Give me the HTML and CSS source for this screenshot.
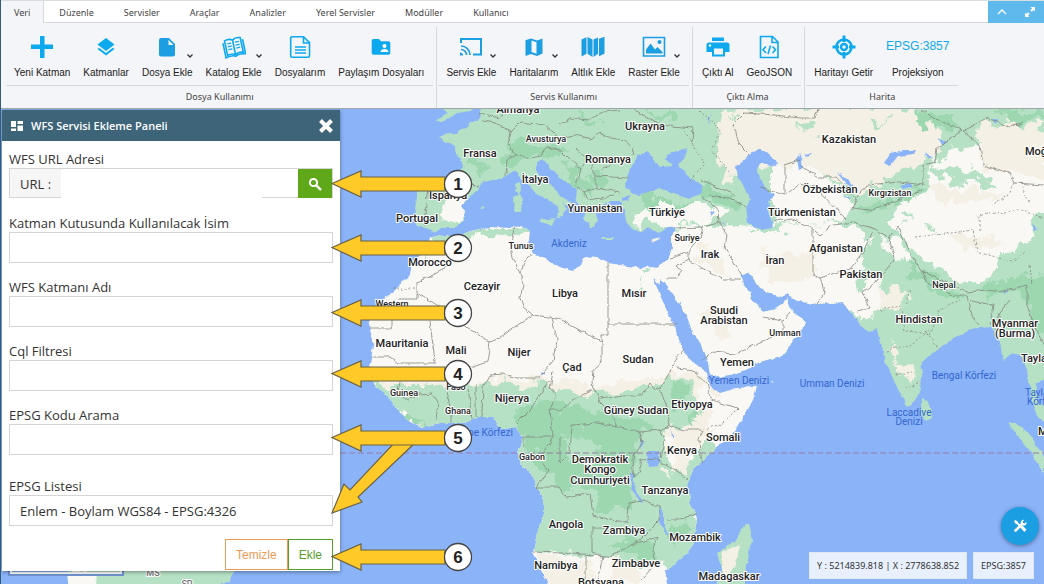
FILE: index.html
```html
<!DOCTYPE html>
<html lang="tr">
<head>
  <meta charset="UTF-8" />
  <meta name="viewport" content="width=device-width, initial-scale=1.0"/>
  <title>WFS Servisi Ekleme Paneli</title>
  <link rel="stylesheet" href="styles.css">
</head>
<body>
  <header class="ribbon">
    <nav class="tabs">
      <a class="tab active" href="#veri">Veri</a>
      <a class="tab" href="#duzenle">Düzenle</a>
      <a class="tab" href="#servisler">Servisler</a>
      <a class="tab" href="#araclar">Araçlar</a>
      <a class="tab" href="#analizler">Analizler</a>
      <a class="tab" href="#yerel">Yerel Servisler</a>
      <a class="tab" href="#moduller">Modüller</a>
      <a class="tab" href="#kullanici">Kullanıcı</a>
      <div class="window-tools">
        <button type="button" aria-label="Daralt">
          <svg width="12" height="12" viewBox="0 0 12 12"><path d="M2 8l4-4 4 4" fill="none" stroke="#fff" stroke-width="1.3"/></svg>
        </button>
        <button type="button" aria-label="Tam ekran">
          <svg width="12" height="12" viewBox="0 0 12 12"><path d="M6.500 1H11v4.500L9.500 4 7.800 5.700 6.300 4.200 8 2.500zM5.500 11H1V6.500L2.500 8l1.700-1.700 1.500 1.500L4 9.500z" fill="#fff"/></svg>
        </button>
      </div>
    </nav>

    <div class="groups">
      <section class="group">
        <div class="tools">
          <button class="tool" type="button">
            <svg class="icon" viewBox="0 0 24 24"><path d="M10 1h4.500v8.500H23V14h-8.500v9H10v-9H1V9.500h9z"/></svg>
            Yeni Katman
          </button>
          <button class="tool" type="button">
            <svg class="icon" viewBox="0 0 24 24"><path d="M12 3l8.500 6.500L12 16 3.500 9.500z"/><path d="M12 18.100l6.900-5.400 1.600 1.300L12 20.600 3.500 14l1.600-1.300z"/></svg>
            Katmanlar
          </button>
          <button class="tool" type="button">
            <svg class="icon" viewBox="0 0 24 24"><path class="soft" d="M6 3h8l6 6v10.500a2 2 0 0 1-2 2H6a2 2 0 0 1-2-2V5a2 2 0 0 1 2-2zm7.500 1.800V10H18.500z"/></svg>
            Dosya Ekle
            <svg class="caret" viewBox="0 0 8 6"><path d="M1.500 1.500L4 4l2.500-2.500"/></svg>
          </button>
          <button class="tool" type="button">
            <svg class="icon" viewBox="0 0 24 24"><g class="line" transform="rotate(-12 12 12)"><path d="M12 5c-2-1.700-5.500-1.800-8-1v15c2.500-.8 6-.7 8 1 2-1.700 5.500-1.800 8-1V4c-2.500-.8-6-.7-8 1v15"/><path d="M2 6v15c4-1 8-1 10 .5C14 20 18 20 22 21V6"/><path d="M6 7.500h4M6 10.500h4M6 13.500h4M14 7.500h4M14 10.500h4M14 13.500h4" stroke-width="1.300"/></g></svg>
            Katalog Ekle
            <svg class="caret" viewBox="0 0 8 6"><path d="M1.500 1.500L4 4l2.500-2.500"/></svg>
          </button>
          <button class="tool" type="button">
            <svg class="icon" viewBox="0 0 24 24"><g class="line"><path d="M4 1.700h11.500l6 6V21a1.300 1.300 0 0 1-1.300 1.300H4A1.300 1.300 0 0 1 2.700 21V3A1.300 1.300 0 0 1 4 1.700zM15.500 2v6h6"/><path d="M7 12h11M7 15h11M7 18h11"/></g></svg>
            Dosyalarım
          </button>
          <button class="tool" type="button">
            <svg class="icon" viewBox="0 0 24 24"><path d="M4.500 4H10l2 2.200h7.500A1.800 1.800 0 0 1 21.300 8v10a1.800 1.800 0 0 1-1.800 1.800h-15A1.800 1.800 0 0 1 2.700 18V5.800A1.800 1.800 0 0 1 4.500 4z"/><circle cx="15.500" cy="11" r="2" fill="#fff"/><path d="M11.500 17c0-2 2-3 4-3s4 1 4 3z" fill="#fff"/></svg>
            Paylaşım Dosyaları
          </button>
        </div>
        <h2 class="group-title">Dosya Kullanımı</h2>
      </section>

      <section class="group">
        <div class="tools">
          <button class="tool" type="button">
            <svg class="icon" viewBox="0 0 24 24"><g class="line soft-line"><path d="M2 8V4h20v15.500h-8" stroke-width="2"/><path d="M2 11a9 9 0 0 1 9 9M2 14.500a5.500 5.500 0 0 1 5.500 5.500"/></g><path class="soft" d="M1 17.500a3 3 0 0 1 3 3H1z"/></svg>
            Servis Ekle
            <svg class="caret" viewBox="0 0 8 6"><path d="M1.500 1.500L4 4l2.500-2.500"/></svg>
          </button>
          <button class="tool" type="button">
            <svg class="icon" viewBox="0 0 24 24"><path class="soft" fill-rule="evenodd" d="M4 5l5-1.500 6 2 5.500-2V18.500L15 21l-6-2-5.500 2V5.500zM9.500 5.500v11.500l5 1.700V7.200z"/></svg>
            Haritalarım
            <svg class="caret" viewBox="0 0 8 6"><path d="M1.500 1.500L4 4l2.500-2.500"/></svg>
          </button>
          <button class="tool" type="button">
            <svg class="icon" viewBox="0 0 24 24"><path class="soft" d="M.5 4.500l5-2.300v16.500l-5 2.800zM6.500 2l5 2.500V22l-5-3.300zM12.500 4.500l4.500-2v16.300L12.500 22zM18 3.700l5.500-2v17l-5.500 2.500z"/></svg>
            Altlık Ekle
          </button>
          <button class="tool" type="button">
            <svg class="icon" viewBox="0 0 24 24"><path class="line soft-line" d="M1.500 2.500h21v18.500h-21z"/><path class="soft" d="M4 18.500v-4l4.500-6 4.500 6 2.500-2.500 5 5v1.500z"/><circle class="soft" cx="17.500" cy="7" r="2"/></svg>
            Raster Ekle
            <svg class="caret" viewBox="0 0 8 6"><path d="M1.500 1.500L4 4l2.500-2.500"/></svg>
          </button>
        </div>
        <h2 class="group-title">Servis Kullanımı</h2>
      </section>

      <section class="group">
        <div class="tools">
          <button class="tool" type="button">
            <svg class="icon" viewBox="0 0 24 24"><path fill-rule="evenodd" d="M6 2.500h12V6H6zM3 7.500h18a2.500 2.500 0 0 1 2.500 2.500v7h-4.500v4.500H6V17H.5v-7A2.500 2.500 0 0 1 3 7.500zM8 13.500v6h9v-6z"/><circle cx="4" cy="10.500" r="1.200" fill="#fff"/></svg>
            Çıktı Al
          </button>
          <button class="tool" type="button">
            <svg class="icon" viewBox="0 0 24 24"><g class="line"><path d="M3.500 1.500h12l5.500 5.500v15.500H3.500zM15 2v5.500h6"/><path d="M9 11.500L6 14.700 9 18M15.500 11.500l3 3.200-3 3.300M13.500 10.500L11 19"/></g></svg>
            GeoJSON
          </button>
        </div>
        <h2 class="group-title">Çıktı Alma</h2>
      </section>

      <section class="group">
        <div class="tools">
          <button class="tool" type="button">
            <svg class="icon" viewBox="0 0 24 24"><g class="line"><circle cx="12" cy="12" r="7.500" stroke-width="2.600"/><circle cx="12" cy="12" r="3" stroke-width="2.400"/><path d="M12 .5V7M12 17v6.500M.5 12H7M17 12h6.500" stroke-width="3"/></g></svg>
            Haritayı Getir
          </button>
          <button class="tool" type="button">
            <span class="epsg">EPSG:3857</span>
            Projeksiyon
          </button>
        </div>
        <h2 class="group-title">Harita</h2>
      </section>
    </div>
  </header>

  <main class="map">
    <svg class="world" viewBox="0 109 1044 475" preserveAspectRatio="xMinYMin slice" role="img" aria-label="Harita">
      <defs>
        <filter id="coast" x="0" y="0" width="100%" height="100%">
          <feTurbulence type="fractalNoise" baseFrequency=".12" numOctaves="3" seed="4"/>
          <feDisplacementMap in="SourceGraphic" scale="5" xChannelSelector="R" yChannelSelector="G"/>
        </filter>
        <filter id="rough" x="-10%" y="-10%" width="120%" height="120%">
          <feTurbulence type="fractalNoise" baseFrequency=".06" numOctaves="4" seed="9"/>
          <feDisplacementMap in="SourceGraphic" scale="26" xChannelSelector="R" yChannelSelector="G"/>
        </filter>
        <path id="eurasia" d="M480 100L482 113 478 119 468 124 467 128 459 130 457 134 451 133 440 137 445 142 455 147 458 155 462 165 458 180 440 180 420 179 417 187 417 197 414 215 416 225 425 227 430 231 434 232 440 228 455 228 463 220 465 212 462 207 468 198 480 188 483 182 493 180 507 175 515 170 523 180 530 188 543 197 552 202 558 207 559 212 557 218 563 217 567 209 562 203 569 206 571 202 560 196 552 187 544 179 537 172 537 163 543 160 550 168 560 177 570 184 577 190 576 200 583 209 586 213 584 217 590 227 595 227 597 220 594 212 600 205 610 202 622 202 625 215 627 223 632 228 640 232 647 228 657 233 667 228 675 227 672 237 672 248 667 262 657 268 660 280 665 282 670 292 677 302 688 318 693 335 702 345 707 357 710 373 720 378 740 372 760 363 780 357 793 342 803 328 806 321 797 315 790 308 787 297 783 305 773 310 762 312 757 304 752 300 750 292 743 283 740 275 748 272 757 285 767 293 778 297 787 293 793 300 810 303 817 305 843 303 850 312 857 320 863 328 870 332 878 327 880 338 885 360 890 372 897 387 907 407 914 402 920 390 922 363 933 353 950 341 960 335 968 331 980 328 992 327 998 335 1000 343 1003 360 1013 353 1022 357 1027 370 1030 387 1032 400 1038 417 1050 426V408L1038 403 1035 384 1050 376V100z"/>
        <path id="africa" d="M652 266L640 268 608 263 597 258 585 257 580 265 573 271 560 267 543 257 532 253 528 240 529 230 522 226 510 228 490 227 470 231 455 238 437 235 430 239 427 248 412 265 410 275 393 292 385 297 373 312 369 327 373 340 373 347 370 363 368 373 375 385 387 395 397 410 410 422 422 427 440 423 463 423 480 417 493 417 497 425 503 429 517 427 523 437 518 450 520 463 530 473 537 487 543 500 543 517 537 533 533 553 543 573 555 600H667L667 584 665 570 677 562 688 553 694 540 697 517 690 503 688 483 693 470 710 453 730 437 742 420 753 400 757 387 737 388 720 393 710 387 707 373 697 365 687 357 678 340 675 325 670 318 660 295 653 278 659 285 661 278 657 267z"/>
        <path id="america" d="M67 572L70 600H215L218 587 230 580 236 566H70z"/>
        <clipPath id="clipEurasia"><use href="#eurasia"/></clipPath>
        <clipPath id="clipAfrica"><use href="#africa"/></clipPath>
      </defs>

      <rect class="water" y="100" width="1060" height="500"/>

      <g filter="url(#coast)">
        <!-- Europe and Asia -->
        <use href="#eurasia" class="green"/>
        <g clip-path="url(#clipEurasia)">
          <g filter="url(#rough)">
            <path class="deep" d="M505 150L530 140 560 145 570 152 540 158 510 166zM560 162l20 6 12 20-6 10-16-20zM590 172l18 4-2 12-12 0zM640 195l50 8-10 6-44-2zM702 183l38 20-4 8-36-16zM465 165l20 -3-6 10zM575 112l24 8-10 5zM640 112h40v8zM850 208l30-3 25-16 20-5-16 18-40 10zM895 255l12 5 60 38-14-2-40-20zM985 285l45-10 18 10v60l-16-20-10-30-38-2zM900 110l50 2 10 20-26-6zM1000 110h44v12l-40 2z"/>
            <path class="cream" d="M442 200L468 195 466 212 452 225 434 218zM638 208L660 204 700 204 722 210 710 222 680 226 650 222 634 220z"/>
            <path class="cream" d="M664 240L676 228 716 224 735 222 745 232 775 232 800 225 850 226 868 238 862 255 866 272 885 285 895 292 878 312 870 322 850 306 840 330 700 400 650 300 650 260z"/>
            <path class="cream" d="M772 168L800 160 850 195 845 222 805 226 772 224z"/>
            <path class="sand" d="M722 125L738 112 800 104 900 104 930 124 945 140 935 160 905 172 880 184 860 196 830 178 800 165 775 172 758 165 740 162 730 185 718 160z"/>
            <path class="cream" d="M893 205L925 195 930 165 950 150 985 145 1060 150V210L1030 218 1035 240 1000 258 985 280 955 282 915 252 892 225zM880 235l20 5 12 20-10 4-20-18z"/>
            <path class="sand" d="M975 128L1000 122 1050 130V180L985 170zM895 365l16-6 6 18-16 4zM889 343l6-4 2 30zM880 285l20 2 10 14-30 10z"/>
            <path class="green" d="M930 165L960 168 985 178 1000 190 975 185 940 182zM868 188l30-6 18 8-34 14zM905 210l6-2-2 14zM922 225l20 2-18 4zM800 130l16-6-4 10zM870 118l20 4-14 4z"/>
            <path class="sand" d="M700 240l20 10 15 30-40-20zM760 250l60 5-10 25-40 0zM700 310l40 10-20 20zM925 185l90 10-60 10zM945 235l60 5-40 14z"/>
            <path class="green" d="M770 226L745 222 750 229 772 232 785 224zM852 290l8-14 14-22 4 6-14 24-8 10z"/>
          </g>
        </g>

        <!-- Africa -->
        <use href="#africa" class="cream"/>
        <g clip-path="url(#clipAfrica)">
          <g filter="url(#rough)">
            <path class="green" d="M455 226H540V232L512 236 488 234 460 240 436 250 424 256 434 236z"/>
            <path class="sand" d="M360 378L440 382 560 378 600 388 660 372 690 366 740 400 700 450 640 430 540 400 360 390z"/>
            <path class="green" d="M366 384L400 384 440 390 480 384 515 386 545 384 560 388 600 392 630 396 655 386 672 372 690 378 696 400 690 420 660 432 664 450 680 470 700 452 712 440 720 450 698 500 704 560 690 570 600 560 530 550 540 500 500 440 420 430 380 404z"/>
            <path class="deep" d="M510 415L545 402 600 412 650 425 640 445 630 470 632 510 600 512 590 490 560 485 540 470 524 440zM400 416l30 10h-20zM676 376l12 8-2 16-6 8-10 4 4-16zM686 415l12 2-8 8zM600 540l50 0 8 20-30-8zM670 520l20 0 0 20-20 10z"/>
            <path class="green" d="M560 440L590 432 600 450 575 462z"/>
            <path class="sand" d="M672 436L694 432 688 462 678 476zM654 470l16 2 8 10-18-4zM528 548L560 560 590 566 600 582 545 600zM610 562l24 0 4 22-30 0z"/>
            <path class="cream" d="M704 384l14 12 34-12-10 32-22 14-14-14-8-16z"/>
            <path class="green" d="M634 267h16l-6 8zM640 278l2 12-2 8z"/>
          </g>
        </g>

        <!-- Islands -->
        <path class="green" d="M435 121L442 117 448 112 440 104H482L470 111 458 113 446 120zM515 184l5-2 1 8-3 6-2-5zM514 197l5-3 3 6-1 12-6 0zM538 220l18-2-3 8-12-4zM600 238l14 0-2 2-10 0zM480 207l4-1 2 2-4 1z"/>
        <path class="sand" d="M651 240l9-4-2 4-5 2zM770 381l6 0-4 2z"/>
        <path class="green" d="M920 404l3-6 6 6 3 12-6 5-5-5zM1008 422l10 2 14 14 12 18v18l-14-22-14-18zM717 553l18-12 10-17 4 0 4 16-3 6-6 40h-28l6-16z"/>
        <path class="sand" d="M722 552l18-8-4 20-10 14-4-8z"/>
        <use href="#america" class="green"/>
        <path class="cream" d="M67 572h30l-2 28H70z"/>

        <!-- Seas and lakes -->
        <g class="water">
          <path d="M625 187L627 177 632 165 638 155 648 152 655 161 660 167 673 166 665 160 668 155 688 147 685 156 678 165 687 175 702 185 702 193 690 198 670 192 660 188 645 193 633 195zM621 198l10-2-2 4-8 1z"/>
          <path d="M735 167L747 157 760 148 768 155 778 163 773 167 763 162 757 168 760 178 765 188 775 196 767 202 770 215 773 227 760 229 747 222 745 208 750 200 742 183 737 175z"/>
          <path d="M797 160l4-6 2 14-4 2zM804 155l8-2-4 4zM838 173l10 6 8 12-4-1zM884 163l6-10 14-3 12 0-2 4-16 2-8 10zM900 185l8-2 4 3-8 3zM925 152l8 6-4 2zM937 138l10 4-4 2zM992 119l6 0-2 6zM1032 224l6 4-4 2zM1002 293l6-3 0 2zM842 196l10 2-6 1z"/>
          <path d="M647 452h12v14l-10 1zM631 472l2 0 2 18 8 12-2 0-9-12zM660 507l4 6 0 14 5 8-3 0-6-14zM670 428l4 10-3-2zM641 441l3 2-4 6zM541 371l4 2-3 2zM711 210l4 2-4 4zM723 220l2 6-2-1zM708 119l4-6-3 12z"/>
        </g>
      </g>

      <!-- Borders -->
      <g class="border" filter="url(#coast)">
        <path d="M457 242L445 268 433 275 417 282V299H398M417 292L437 305 458 322 485 338 490 342 500 338 513 328 533 315 523 307 520 298 523 285 520 272 512 258 510 246 515 227M520 272L525 262 532 253M392 312V328H369M430 322L433 345 435 363H398L390 357H373M490 342L487 362 473 367 445 370M533 315L557 318 602 342V335H608V263M552 318L557 340 553 360 543 372 540 378 517 378 503 374 490 375 483 387 482 417M602 340V362L593 370 592 383 600 402M608 324H677M600 398L623 395 643 395 650 383 655 390 660 388 670 372 675 360 685 348M592 390L572 400 560 410 550 410M560 463L570 453 572 425 597 423 617 427 640 432 660 430 670 425 667 407 660 388M617 427L610 412 600 402M677 368L693 370 707 383 710 397 720 403 738 408M670 425L683 430 703 430M703 430L699 438 700 457 704 462M658 460L688 479M660 430L665 440 660 457M640 432L642 443 632 460 634 478 641 470 640 460 659 459"/>
        <path d="M537 487L560 487 567 498 590 493 593 515 610 520 627 522 628 502 642 500 660 507V520L640 540 610 557 603 557 592 553V527H608M533 552L563 553 603 557 596 584M586 557V590M637 543L657 537 653 548 654 567 642 580M667 520L680 520 696 513M517 423L530 410 550 380M553 372L550 388 556 395M556 395L550 410 553 437H523V446M553 437L540 460 548 470 537 487M560 437V463M400 382L398 392 408 400 420 394 432 393 438 402 436 420M447 392L451 412 451 423M468 388L472 420M476 384V417"/>
        <path d="M675 228L703 227 718 223 717 208 702 197M703 227L700 238 688 252 675 257 670 258M688 252L688 260 723 280 740 280M718 223L727 235 725 248 737 268 742 275M688 260L676 266 682 270 676 278 667 278M773 222L790 218 810 227 820 235 833 225 853 222 872 228M813 230L813 275 820 278 850 268 863 252 872 232M820 278L825 293 817 305M800 165L818 177 837 177 855 197M785 194V165L800 160M760 188L785 195 800 184 815 187 845 218M857 197L867 185 900 182 923 185 923 165 935 162 937 148 953 137 962 130 933 118 922 109M857 197L852 208 870 210 890 203 923 190M963 130L980 145 983 165 1010 173 1015 183 1044 185M963 130L987 118 1010 127 1023 122M872 228L888 238 898 226 913 258 923 272 967 292 987 290 1000 292 1027 285M888 238L895 258 880 278 863 292 870 308 858 312M923 272L927 282 953 295 967 295 973 318 980 326M967 300L993 305 990 325M1027 285L1027 305 1036 330 1044 345M1010 300L1000 312 996 330M702 360L712 352 735 354 760 342 783 333 783 320 790 312M783 320L762 317M733 125L740 145 750 155M733 125L745 113 774 115 800 118 815 118 818 109"/>
        <path d="M481 120L495 122 510 132 508 144 516 155 507 160 506 175M458 182L480 186M428 185L424 225M516 155L530 158 541 156 545 148M480 113L500 118 510 110M510 132L520 122 545 125 560 138 575 135 590 140 600 132M545 148L560 150 570 160 580 168 590 160 575 148M560 125L570 118 588 120 604 112 620 110M600 132L610 138 625 140 632 148 634 156M590 160L596 176 628 178M596 176L596 188 620 192M580 168L576 186 584 192 596 188M584 192L588 200 614 196M632 109L660 125 693 128 692 142M702 180L735 195M710 196L735 200 745 208M610 165L600 172"/>
      </g>
      <g class="border dashed" filter="url(#coast)">
        <path d="M393 289H417M738 408L723 423 703 430M915 238L973 230 977 252 1013 262 1026 250M980 230L980 215 1020 210 1044 218M1015 183L1008 195 992 205M1020 183L1030 205M700 110L720 130 712 150 730 172M685 130L705 165 690 180M880 310L900 305 905 330 930 335 940 310 960 300M886 350L910 345 930 330M895 375L912 372M910 290L905 305M905 388L920 382M940 350L925 330M1030 265L1032 285"/>
      </g>

      <path class="equator" d="M340 453H1060"/>

      <g class="place">
        <text x="518" y="113">Almanya</text>
        <text class="small" x="546" y="142">Avusturya</text>
        <text x="480" y="157">Fransa</text>
        <text x="535" y="183">İtalya</text>
        <text x="448" y="199">İspanya</text>
        <text x="417" y="222">Portugal</text>
        <text x="645" y="130">Ukrayna</text>
        <text x="608" y="163">Romanya</text>
        <text x="595" y="212">Yunanistan</text>
        <text x="667" y="216">Türkiye</text>
        <text x="849" y="143">Kazakistan</text>
        <text x="830" y="193">Özbekistan</text>
        <text class="small" x="890" y="196">Kırgızistan</text>
        <text x="802" y="216">Türkmenistan</text>
        <text class="start" x="1025" y="155">Moğolistan</text>
        <text class="small" x="687" y="241">Suriye</text>
        <text x="710" y="258">Irak</text>
        <text x="775" y="264">İran</text>
        <text x="836" y="252">Afganistan</text>
        <text x="861" y="278">Pakistan</text>
        <text class="small" x="944" y="288">Nepal</text>
        <text x="919" y="323">Hindistan</text>
        <text x="1015" y="327">Myanmar</text>
        <text x="1015" y="337">(Burma)</text>
        <text class="start" x="1021" y="362">Tayland</text>
        <text class="start" x="1038" y="435">Malezya</text>
        <text class="small" x="521" y="249">Tunus</text>
        <text x="430" y="266">Morocco</text>
        <text x="482" y="290">Cezayir</text>
        <text x="565" y="297">Libya</text>
        <text x="634" y="297">Mısır</text>
        <text x="724" y="314">Suudi</text>
        <text x="724" y="324">Arabistan</text>
        <text class="small" x="785" y="336">Umman</text>
        <text x="737" y="366">Yemen</text>
        <text class="small" x="392" y="307">Western</text>
        <text x="402" y="347">Mauritania</text>
        <text x="456" y="354">Mali</text>
        <text x="519" y="356">Nijer</text>
        <text x="572" y="371">Çad</text>
        <text x="638" y="363">Sudan</text>
        <text class="small" x="404" y="396">Guinea</text>
        <text class="small" x="456" y="390">Faso</text>
        <text x="512" y="402">Nijerya</text>
        <text class="small" x="458" y="414">Ghana</text>
        <text x="692" y="408">Etiyopya</text>
        <text x="636" y="414">Güney Sudan</text>
        <text x="723" y="441">Somali</text>
        <text x="682" y="454">Kenya</text>
        <text class="small" x="532" y="460">Gabon</text>
        <text x="600" y="463">Demokratik</text>
        <text x="600" y="473">Kongo</text>
        <text x="600" y="484">Cumhuriyeti</text>
        <text x="665" y="494">Tanzanya</text>
        <text x="566" y="528">Angola</text>
        <text x="624" y="534">Zambiya</text>
        <text x="695" y="541">Mozambik</text>
        <text x="556" y="569">Namibya</text>
        <text x="636" y="567">Zimbabve</text>
        <text x="601" y="586">Botsvana</text>
        <text x="729" y="580">Madagaskar</text>
        <text class="small faint" x="153" y="576">MS</text>
        <text class="small faint" x="187" y="587">SP</text>
      </g>
      <g class="sea">
        <text x="569" y="247">Akdeniz</text>
        <text x="486" y="436">Gine Körfezi</text>
        <text x="739" y="384">Yemen Denizi</text>
        <text x="832" y="387">Umman Denizi</text>
        <text x="964" y="379">Bengal Körfezi</text>
        <text x="909" y="416">Laccadive</text>
        <text x="909" y="425">Denizi</text>
        <text class="start" x="1025" y="396">Tayland</text>
        <text class="start" x="1027" y="405">Körfezi</text>
      </g>
    </svg>
    <div class="scale-line"></div>

    <form class="panel">
      <div class="panel-header">
        <svg width="12" height="12" viewBox="0 0 12 12"><path d="M0 1h5v6H0zM6.500 1H12v3H6.500zM0 8.500h5V11H0zM6.500 5.500H12V11H6.500z" fill="#fff"/></svg>
        <h1>WFS Servisi Ekleme Paneli</h1>
        <button class="close" type="button" aria-label="Kapat">
          <svg width="16" height="16" viewBox="0 0 16 16"><path d="M2.500 2.500l11 11M13.500 2.500l-11 11" stroke="#fff" stroke-width="4"/></svg>
        </button>
      </div>
      <div class="panel-body">
        <div class="field">
          <label for="url">WFS URL Adresi</label>
          <div class="url-group">
            <span class="addon">URL :</span>
            <input class="url-input" id="url" type="text">
            <button class="search" type="button" aria-label="Ara">
              <svg width="14" height="14" viewBox="0 0 14 14"><circle cx="5.500" cy="5.500" r="3.600" fill="none" stroke="#fff" stroke-width="2"/><path d="M8.300 8.300l4 4" stroke="#fff" stroke-width="2.400" stroke-linecap="round"/></svg>
            </button>
          </div>
        </div>
        <div class="field">
          <label for="layerTitle">Katman Kutusunda Kullanılacak İsim</label>
          <input class="control" id="layerTitle" type="text">
        </div>
        <div class="field">
          <label for="layerName">WFS Katmanı Adı</label>
          <input class="control" id="layerName" type="text">
        </div>
        <div class="field">
          <label for="cql">Cql Filtresi</label>
          <input class="control" id="cql" type="text">
        </div>
        <div class="field search-field">
          <label for="epsgSearch">EPSG Kodu Arama</label>
          <input class="control" id="epsgSearch" type="text">
        </div>
        <div class="field">
          <label for="epsgList">EPSG Listesi</label>
          <select class="control" id="epsgList">
            <option>Enlem - Boylam WGS84 - EPSG:4326</option>
          </select>
        </div>
        <div class="actions">
          <button class="btn clear" type="reset">Temizle</button>
          <button class="btn add" type="button">Ekle</button>
        </div>
      </div>
    </form>

    <!-- Numbered callouts pointing at the form fields -->
    <svg class="callouts" width="142" height="475" viewBox="331 109 142 475">
      <defs>
        <g id="arrow">
          <path d="M1-0.500L30-13V-7H114V7H30V13z"/>
        </g>
      </defs>
      <g class="arrows">
        <path d="M332 513L344 484 350 490 396 441H417L358 497 362 502z"/>
        <use href="#arrow" x="331" y="184"/>
        <use href="#arrow" x="331" y="248"/>
        <use href="#arrow" x="331" y="313"/>
        <use href="#arrow" x="331" y="374"/>
        <use href="#arrow" x="331" y="438"/>
        <use href="#arrow" x="331" y="557"/>
      </g>
      <g class="discs">
        <circle cx="458" cy="184" r="13.500"/>
        <circle cx="458" cy="248" r="13.500"/>
        <circle cx="458" cy="313" r="13.500"/>
        <circle cx="458" cy="374" r="13.500"/>
        <circle cx="458" cy="438" r="13.500"/>
        <circle cx="458" cy="557" r="13.500"/>
      </g>
      <g class="digits">
        <text x="458" y="190">1</text>
        <text x="458" y="254">2</text>
        <text x="458" y="319">3</text>
        <text x="458" y="380">4</text>
        <text x="458" y="444">5</text>
        <text x="458" y="563">6</text>
      </g>
    </svg>

    <div class="corner">
      <button class="fab" type="button" aria-label="Araçlar">
        <svg width="14" height="14" viewBox="0 0 14 14"><path d="M3.500 3.500l8 8" stroke="#fff" stroke-width="1.800"/><path d="M1 2.200L2.200 1l2.800 1.800v1.400L4.200 5H2.800z" fill="#fff"/><path d="M8 8l1.500-1.500 4 4.300-2.200 2.200z" fill="#fff"/><path d="M2.500 11.500l6-6" stroke="#fff" stroke-width="2.600" stroke-linecap="round"/><path d="M11.500.8L9.800 2.600l.3 1.500 1.500.3 1.700-1.700c.6 1.700 0 3.500-2 3.800-2.500.3-4-1.300-3.600-3.300C8 1.300 9.800.4 11.500.8z" fill="#fff"/></svg>
      </button>
      <div class="readouts">
        <output class="readout">Y : 5214839.818 | X : 2778638.852</output>
        <output class="readout">EPSG:3857</output>
      </div>
    </div>
  </main>
</body>
</html>
```

FILE: styles.css
```css
* {
  box-sizing: border-box;
}

body {
  margin: 0;
  min-height: 100vh;
  display: flex;
  flex-direction: column;
  border-left: 1px solid #2f5d76;
  font-family: "Noto Sans", "Open Sans", sans-serif;
  color: #333;
  overflow: hidden;
}

button {
  font-family: inherit;
  border: none;
  padding: 0;
  background: none;
  cursor: pointer;
}

/* Ribbon */
.ribbon {
  background: #f4f5f8;
  border-top: 1px solid #d9dce0;
  border-bottom: 1px solid #9fa5a8;
}

.tabs {
  display: flex;
  height: 22px;
  background: #fff;
  border-bottom: 1px solid #d5d8dc;
}

.tab {
  padding: 0 15px;
  font-size: 9px;
  line-height: 23px;
  color: #444;
  text-decoration: none;
}

.tab.active {
  height: 22px;
  padding: 0 13px;
  line-height: 24px;
  background: #f4f5f8;
  border-right: 1px solid #d5d8dc;
}

.window-tools {
  display: flex;
  height: 22px;
  margin-left: auto;
  background: #5eb9ec;
}

.window-tools button {
  width: 28px;
  display: flex;
  align-items: center;
  justify-content: center;
}

.groups {
  display: flex;
  height: 85px;
  padding: 4px 4px 0;
}

.group {
  padding: 0 3px 0 1px;
  border-right: 1px solid #d5d8dc;
  display: flex;
  flex-direction: column;
}

.group:last-child {
  border-right: none;
}

.tools {
  flex: 1;
  display: flex;
  gap: 1px;
  padding: 0 3px 0 2px;
  border-bottom: 1px solid #d5d8dc;
}

.tool {
  position: relative;
  display: flex;
  flex-direction: column;
  align-items: center;
  gap: 8px;
  padding: 8px 6px 0;
  font-family: "Liberation Sans", Arial, sans-serif;
  font-size: 10px;
  line-height: 12px;
  color: #222;
  white-space: nowrap;
}

.icon {
  width: 24px;
  height: 24px;
  fill: #0da9ee;
}

.icon .soft {
  fill: #1c9fe2;
}

.icon .line {
  fill: none;
  stroke: #0da9ee;
  stroke-width: 1.6;
}

.icon .soft-line {
  stroke: #1c9fe2;
}

.caret {
  position: absolute;
  right: 5px;
  top: 26px;
  width: 8px;
  height: 6px;
  fill: none;
  stroke: #333;
  stroke-width: 1.3;
}

.epsg {
  height: 24px;
  font-size: 12px;
  line-height: 22px;
  color: #0da9ee;
}

.group-title {
  margin: 0;
  font-size: 9px;
  font-weight: normal;
  line-height: 22px;
  text-align: center;
  color: #444;
}

/* Map */
.map {
  position: relative;
  flex: 1;
  overflow: hidden;
  background: #8ab3f8;
}

.world {
  position: absolute;
  top: 0;
  left: -1px;
  width: calc(100% + 1px);
  height: 100%;
}

.water { fill: #8ab3f8; }
.green { fill: #b6e1c5; }
.deep { fill: #9cd7b0; }
.cream { fill: #faf8f4; }
.sand { fill: #f5f0e6; }

.border {
  fill: none;
  stroke: #84867f;
  stroke-width: 0.8;
}

.dashed {
  stroke-dasharray: 2 2;
}

.equator {
  fill: none;
  stroke: #a07ba6;
  stroke-width: 1;
  stroke-dasharray: 6 3;
}

.place text,
.sea text {
  font-family: Roboto, sans-serif;
  font-size: 11px;
  text-anchor: middle;
}

.place text {
  font-weight: 500;
  fill: #222;
  stroke: #fff;
  stroke-width: 2px;
  stroke-linejoin: round;
  paint-order: stroke;
}

.place .small {
  font-size: 9px;
}

.place .faint {
  fill: #777;
}

.sea text {
  font-size: 10px;
  fill: #3467cf;
}

.place .start,
.sea .start {
  text-anchor: start;
}

.scale-line {
  position: absolute;
  left: 9px;
  bottom: 10px;
  width: 112px;
  height: 10px;
  border: 2px solid #fff;
  border-top: none;
  box-shadow: 0 0 0 2px #6f92cf;
}

/* WFS panel */
.panel {
  position: absolute;
  top: 1px;
  left: 1px;
  width: 338px;
  background: #fff;
  box-shadow: 0 1px 4px rgba(0, 0, 0, 0.4);
  font-family: "Open Sans", "Noto Sans", sans-serif;
}

.panel-header {
  display: flex;
  align-items: center;
  gap: 8px;
  height: 31px;
  padding: 0 6px 0 9px;
  background: #3d6478;
}

.panel-header h1 {
  margin: 0;
  font-size: 11px;
  font-weight: 600;
  line-height: 16px;
  color: #fff;
}

.close {
  display: flex;
  margin-left: auto;
}

.panel-body {
  padding: 9px 7px 1px;
}

.field {
  margin-bottom: 15px;
}

.search-field {
  margin-bottom: 22px;
}

.field label {
  display: block;
  font-size: 13px;
  line-height: 18px;
}

.control {
  display: block;
  width: 100%;
  height: 31px;
  padding: 0 10px;
  border: 1px solid #d5d5d5;
  border-radius: 0;
  background: #fff;
  font-family: inherit;
  font-size: 13px;
  color: #333;
  appearance: none;
}

.url-group {
  display: flex;
  height: 30px;
  border: 1px solid #d5d5d5;
  border-bottom: none;
  margin-bottom: 16px;
}

.addon {
  width: 51px;
  padding-left: 10px;
  border-bottom: 1px solid #d5d5d5;
  background: #f6f6f6;
  font-size: 13px;
  line-height: 30px;
}

.url-input {
  flex: 1;
  min-width: 0;
  border: none;
  background: linear-gradient(#d5d5d5, #d5d5d5) right bottom / 36px 1px no-repeat;
}

.search {
  width: 34px;
  display: flex;
  align-items: center;
  justify-content: center;
  background: #5fa81a;
}

.actions {
  display: flex;
  justify-content: flex-end;
  margin-top: -2px;
}

.btn {
  height: 31px;
  padding: 0 10px;
  border: 1px solid;
  font-family: "Liberation Sans", Arial, sans-serif;
  font-size: 12px;
}

.clear {
  border-color: #ef9a55;
  color: #ef9a55;
}

.add {
  border-color: #5a9e2a;
  color: #5a9e2a;
}

/* Callouts */
.callouts {
  position: absolute;
  top: 0;
  left: 330px;
}

.arrows {
  fill: #ffc928;
  stroke: #6b6243;
  stroke-width: 1.2;
}

.discs {
  fill: #fff;
  stroke: #444;
  stroke-width: 1.3;
}

.digits text {
  font-family: "Liberation Sans", Arial, sans-serif;
  font-size: 17px;
  font-weight: bold;
  text-anchor: middle;
  fill: #222;
}

/* Bottom right corner */
.corner {
  position: absolute;
  right: 10px;
  bottom: 5px;
  display: flex;
  flex-direction: column;
  align-items: flex-end;
  gap: 7px;
}

.fab {
  width: 38px;
  height: 38px;
  margin-right: -5px;
  display: flex;
  align-items: center;
  justify-content: center;
  border-radius: 50%;
  background: #1c9fe2;
  box-shadow: 0 1px 4px rgba(0, 0, 0, 0.4);
}

.readouts {
  display: flex;
  gap: 6px;
}

.readout {
  padding: 0 7px;
  border: 1px solid #dfe7f5;
  background: rgba(255, 255, 255, 0.8);
  font-size: 9px;
  line-height: 25px;
  white-space: nowrap;
}
```
